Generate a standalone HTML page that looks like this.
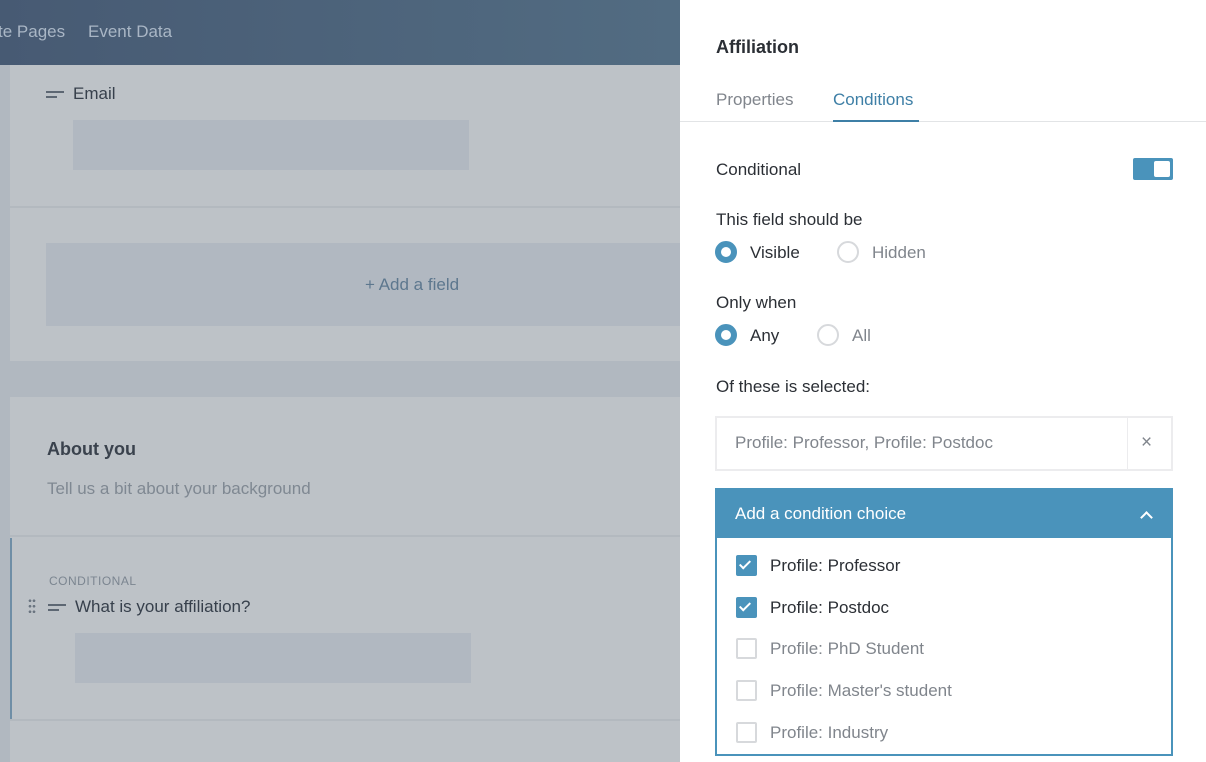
<!DOCTYPE html>
<html><head><meta charset="utf-8"><style>
*{box-sizing:border-box;margin:0;padding:0}
body{width:1206px;height:762px;overflow:hidden;position:relative;font-family:"Liberation Sans",sans-serif;background:#b1b8c0}
.hdr{position:absolute;left:0;top:0;width:680px;height:65px;background:linear-gradient(90deg,#475a73,#526c82)}
.hdr span{position:absolute;top:22px;font-size:17px;color:#a9b6c5}
.card{position:absolute;left:10px;width:670px;background:#bdc2c7}
.div{position:absolute;left:10px;width:670px;height:2px;background:#b3b9bf}
.inp{position:absolute;background:#b1b8c1}
.lbl{position:absolute;font-size:17px;color:#37404c}
.ic{position:absolute;width:18px;height:6px;border-top:2px solid #5d6773}
.ic:after{content:"";position:absolute;left:0;top:3px;width:11px;border-top:2px solid #5d6773}
.panel{position:absolute;left:680px;top:0;width:526px;height:762px;background:#fff}
.t{position:absolute;font-size:17px;color:#2b2f35}
.radio{position:absolute;width:22px;height:22px;border-radius:50%}
.on{border:6px solid #4a93bb}
.off{border:2px solid #d7d9dc}
.cb{position:absolute;left:736px;width:21px;height:21px;border-radius:2px}
.cbon{background:#4a93bb}
.cboff{border:2px solid #d7d9dc}
.gray{color:#80858c}
</style></head><body>
<div class="hdr"><span style="left:-2px">te Pages</span><span style="left:88px">Event Data</span></div>
<div class="card" style="top:65px;height:296px"></div>
<div class="div" style="top:206px"></div>
<div class="ic" style="left:46px;top:91px"></div>
<div class="lbl" style="left:73px;top:84px">Email</div>
<div class="inp" style="left:73px;top:120px;width:396px;height:50px"></div>
<div class="inp" style="left:46px;top:243px;width:634px;height:83px"></div>
<div class="lbl" style="left:365px;top:275px;color:#5d778e">+ Add a field</div>
<div class="card" style="top:397px;height:365px"></div>
<div class="lbl" style="left:47px;top:439px;font-weight:bold;font-size:18px;color:#3a424d">About you</div>
<div class="lbl" style="left:47px;top:479px;color:#7f8892">Tell us a bit about your background</div>
<div class="div" style="top:535px"></div>
<div style="position:absolute;left:10px;top:538px;width:2px;height:182px;background:#6f8ea6"></div>
<div class="div" style="top:719px"></div>
<div style="position:absolute;left:49px;top:574px;font-size:12px;letter-spacing:.5px;color:#7b8590">CONDITIONAL</div>
<div style="position:absolute;left:28px;top:598px;width:8px;height:16px;background:radial-gradient(circle,#6a7480 1.2px,transparent 1.5px) 0 0/4px 5.5px"></div>
<div class="ic" style="left:48px;top:604px"></div>
<div class="lbl" style="left:75px;top:597px">What is your affiliation?</div>
<div class="inp" style="left:75px;top:633px;width:396px;height:50px"></div>

<div class="panel"></div>
<div class="t" style="left:716px;top:37px;font-weight:bold;font-size:18px">Affiliation</div>
<div class="t" style="left:716px;top:90px;color:#80858c">Properties</div>
<div class="t" style="left:833px;top:90px;color:#3e7fa6">Conditions</div>
<div style="position:absolute;left:680px;top:121px;width:526px;height:1px;background:#e2e4e6"></div>
<div style="position:absolute;left:833px;top:120px;width:86px;height:2px;background:#3e7fa6"></div>
<div class="t" style="left:716px;top:160px">Conditional</div>
<div style="position:absolute;left:1133px;top:158px;width:40px;height:22px;background:#4a93bb;border-radius:2px"><div style="position:absolute;right:3px;top:3px;width:16px;height:16px;background:#fff;border-radius:2px"></div></div>
<div class="t" style="left:716px;top:210px">This field should be</div>
<div class="radio on" style="left:715px;top:241px"></div><div class="t" style="left:750px;top:243px">Visible</div>
<div class="radio off" style="left:837px;top:241px"></div><div class="t gray" style="left:872px;top:243px">Hidden</div>
<div class="t" style="left:716px;top:293px">Only when</div>
<div class="radio on" style="left:715px;top:324px"></div><div class="t" style="left:750px;top:326px">Any</div>
<div class="radio off" style="left:817px;top:324px"></div><div class="t gray" style="left:852px;top:326px">All</div>
<div class="t" style="left:716px;top:377px">Of these is selected:</div>
<div style="position:absolute;left:715px;top:416px;width:458px;height:55px;border:2px solid #ececee"></div>
<div style="position:absolute;left:1127px;top:417px;width:1px;height:53px;background:#ececee"></div>
<div class="t gray" style="left:735px;top:433px">Profile: Professor, Profile: Postdoc</div>
<div class="t gray" style="left:1141px;top:432px;font-size:19px">×</div>
<div style="position:absolute;left:715px;top:488px;width:458px;height:268px;border:2px solid #4a93bb"></div>
<div style="position:absolute;left:715px;top:488px;width:458px;height:50px;background:#4a93bb"></div>
<div class="t" style="left:735px;top:504px;color:#fff">Add a condition choice</div>
<div style="position:absolute;left:1142px;top:513px;width:9px;height:9px;border-left:2px solid #fff;border-top:2px solid #fff;transform:rotate(45deg)"></div>
<div class="cb cbon" style="top:555px"><div style="position:absolute;left:6px;top:3px;width:6px;height:11px;border-right:2px solid #fff;border-bottom:2px solid #fff;transform:rotate(45deg)"></div></div>
<div class="t" style="left:770px;top:556px">Profile: Professor</div>
<div class="cb cbon" style="top:597px"><div style="position:absolute;left:6px;top:3px;width:6px;height:11px;border-right:2px solid #fff;border-bottom:2px solid #fff;transform:rotate(45deg)"></div></div>
<div class="t" style="left:770px;top:598px">Profile: Postdoc</div>
<div class="cb cboff" style="top:638px"></div><div class="t gray" style="left:770px;top:639px">Profile: PhD Student</div>
<div class="cb cboff" style="top:680px"></div><div class="t gray" style="left:770px;top:681px">Profile: Master's student</div>
<div class="cb cboff" style="top:722px"></div><div class="t gray" style="left:770px;top:723px">Profile: Industry</div>
</body></html>
